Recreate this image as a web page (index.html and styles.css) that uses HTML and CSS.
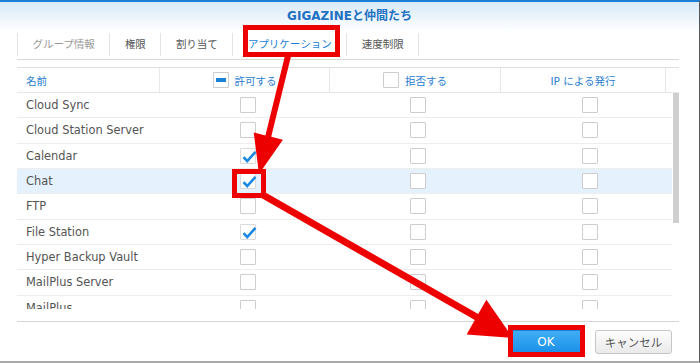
FILE: index.html
```html
<!DOCTYPE html>
<html lang="ja">
<head>
    <meta charset="UTF-8">
    <meta name="viewport" content="width=device-width, initial-scale=1.0">
    <title>GIGAZINEと仲間たち</title>
    <link rel="stylesheet" href="styles.css">
</head>
<body>
    <div class="dialog">
        <div class="dialog-title">GIGAZINEと仲間たち</div>

        <div class="tabs">
            <div class="tab tab-disabled">グループ情報</div>
            <div class="tab">権限</div>
            <div class="tab">割り当て</div>
            <div class="tab tab-active">アプリケーション</div>
            <div class="tab">速度制限</div>
        </div>

        <div class="grid">
            <div class="grid-head">
                <div class="head-name">名前</div>
                <div class="head-allow"><span class="cb cb-partial"></span>許可する</div>
                <div class="head-deny"><span class="cb"></span>拒否する</div>
                <div class="head-ip">IP による発行</div>
                <div class="head-rest"></div>
            </div>

            <div class="grid-body">
                <div class="rows">
                    <div class="row">
                        <div class="cell-name">Cloud Sync</div>
                        <div class="cell"><span class="cb"></span></div>
                        <div class="cell"><span class="cb"></span></div>
                        <div class="cell cell-ip"><span class="cb"></span></div>
                    </div>
                    <div class="row">
                        <div class="cell-name">Cloud Station Server</div>
                        <div class="cell"><span class="cb"></span></div>
                        <div class="cell"><span class="cb"></span></div>
                        <div class="cell cell-ip"><span class="cb"></span></div>
                    </div>
                    <div class="row">
                        <div class="cell-name">Calendar</div>
                        <div class="cell"><span class="cb cb-on"><svg viewBox="0 0 16 16"><path d="M2.5 8.2 L6.2 12 L14.5 2.8"/></svg></span></div>
                        <div class="cell"><span class="cb"></span></div>
                        <div class="cell cell-ip"><span class="cb"></span></div>
                    </div>
                    <div class="row row-selected">
                        <div class="cell-name">Chat</div>
                        <div class="cell"><span class="cb cb-on"><svg viewBox="0 0 16 16"><path d="M2.5 8.2 L6.2 12 L14.5 2.8"/></svg></span></div>
                        <div class="cell"><span class="cb"></span></div>
                        <div class="cell cell-ip"><span class="cb"></span></div>
                    </div>
                    <div class="row">
                        <div class="cell-name">FTP</div>
                        <div class="cell"><span class="cb"></span></div>
                        <div class="cell"><span class="cb"></span></div>
                        <div class="cell cell-ip"><span class="cb"></span></div>
                    </div>
                    <div class="row">
                        <div class="cell-name">File Station</div>
                        <div class="cell"><span class="cb cb-on"><svg viewBox="0 0 16 16"><path d="M2.5 8.2 L6.2 12 L14.5 2.8"/></svg></span></div>
                        <div class="cell"><span class="cb"></span></div>
                        <div class="cell cell-ip"><span class="cb"></span></div>
                    </div>
                    <div class="row">
                        <div class="cell-name">Hyper Backup Vault</div>
                        <div class="cell"><span class="cb"></span></div>
                        <div class="cell"><span class="cb"></span></div>
                        <div class="cell cell-ip"><span class="cb"></span></div>
                    </div>
                    <div class="row">
                        <div class="cell-name">MailPlus Server</div>
                        <div class="cell"><span class="cb"></span></div>
                        <div class="cell"><span class="cb"></span></div>
                        <div class="cell cell-ip"><span class="cb"></span></div>
                    </div>
                    <div class="row">
                        <div class="cell-name">MailPlus</div>
                        <div class="cell"><span class="cb"></span></div>
                        <div class="cell"><span class="cb"></span></div>
                        <div class="cell cell-ip"><span class="cb"></span></div>
                    </div>
                </div>
                <div class="scrollbar"><div class="thumb"></div></div>
            </div>
        </div>

        <div class="footer">
            <button type="button" class="btn btn-primary">OK</button>
            <button type="button" class="btn">キャンセル</button>
        </div>

        <!-- red annotations drawn over the dialog -->
        <svg class="marks" viewBox="0 0 700 363">
            <rect x="245.5" y="27.5" width="92" height="27"/>
            <rect x="234.5" y="171.5" width="29" height="24"/>
            <rect x="510.5" y="327.5" width="72" height="27"/>
            <polygon points="285.1,55.3 290.9,56.7 271.2,136.8 282.9,139.7 259,174 253.7,132.5 265.4,135.4"/>
            <polygon points="264.7,192 478.2,314.1 486.4,299.7 513,338 466.6,334.5 474.8,320.1 261.3,198"/>
        </svg>
    </div>
</body>
</html>
```

FILE: styles.css
```css
body {
    margin: 0;
    width: 700px; height: 363px;
    overflow: hidden;
    font-family: "DejaVu Sans", "Noto Sans CJK JP", sans-serif;
    background: #fff;
}

.dialog {
    position: relative;
    height: 363px;
    box-sizing: border-box;
    display: flex; flex-direction: column;
    border-top: 2px solid #1d7ed6;
    border-right: 1px solid #5a5a5a;
    border-bottom: 2px solid #a9a9a9;
    background: linear-gradient(#d8eaf9, #fff 30px);
}

.dialog-title {
    height: 28px; line-height: 28px;
    text-align: center;
    font-size: 12px; font-weight: bold;
    color: #2170c2;
}

.tabs {
    display: flex; align-items: center;
    height: 29px;
    margin: 0 20px 0 17px;
    border-bottom: 1px solid #d9d9d9;
}

.tab {
    height: 23px; line-height: 23px;
    padding: 0 14.5px;
    border-left: 1px solid #e3e3e3;
    font-size: 10.5px; color: #555;
}

.tab:last-child { border-right: 1px solid #e3e3e3; }
.tab-disabled { color: #9a9a9a; }
.tab-active { color: #1c7fd6; }

.grid {
    margin: 7px 20px 0 17px;
    padding-bottom: 12px;
    border-top: 1px solid #dedede;
    border-bottom: 1px solid #d4d4d4;
}

.grid-head {
    display: grid;
    grid-template-columns: 143px 170px 171px 165px 14px;
    height: 25px;
    box-sizing: border-box;
    border-bottom: 1px solid #e6e6e6;
    font-size: 10.5px; color: #2b80d0;
}

.grid-head > div {
    display: flex; align-items: center; justify-content: center;
    gap: 6px;
    border-right: 1px solid #e8e8e8;
}

.grid-head .head-name { justify-content: flex-start; padding-left: 9px; }
.grid-head .head-rest { border-right: none; }

.grid-body {
    display: flex;
    height: 216px;
    overflow: hidden;
}

.rows { width: 655px; }

.row {
    display: grid;
    grid-template-columns: 143px 175px 166px 171px;
    height: 25.33px;
    box-sizing: border-box;
    border-bottom: 1px solid #ededed;
}

.row-selected { background: #e5f1fc; }

.cell-name {
    display: flex; align-items: center;
    padding-left: 9px;
    font-size: 11.4px; color: #545454;
}

.cell {
    display: flex; align-items: center; justify-content: center;
}

.cell-ip { padding-left: 6px; }

.cb {
    position: relative;
    width: 16px; height: 16px;
    box-sizing: border-box;
    border: 1px solid #cdcdcd;
    border-radius: 1px;
    background: #fff;
}

.cb svg {
    position: absolute;
    left: 0; top: 0;
    width: 16px; height: 16px;
    fill: none; stroke: #1b88e2; stroke-width: 2.6;
}

.cb-on { border-color: #dadada; }

.cb-partial::after {
    content: "";
    position: absolute;
    left: 2px; top: 5px;
    width: 10px; height: 4px;
    background: #1b82d9;
}

.scrollbar {
    width: 8px;
    padding-left: 1px;
}

.scrollbar .thumb {
    width: 6px; height: 130px;
    background: #cfcfcf;
}

.footer {
    flex: 1;
    display: flex; justify-content: flex-end; align-items: flex-start;
    gap: 13px;
    padding: 8px 27px 0 0;
}

.btn {
    height: 24px;
    border: 1px solid #c6c6c6;
    border-radius: 3px;
    background: linear-gradient(#fdfdfd, #eaeaea);
    font-family: "DejaVu Sans", "Noto Sans CJK JP", sans-serif;
    font-size: 11.5px; color: #555;
    width: 77px;
    padding: 0;
}

.btn-primary {
    width: 72px;
    border-color: #1a84d8;
    background: linear-gradient(#40aef6, #1a8fe8);
    color: #fff;
    font-size: 12px;
}

.marks {
    position: absolute;
    left: 0; top: -2px;
    width: 700px; height: 363px;
    pointer-events: none;
}

.marks rect { fill: none; stroke: #ec0000; stroke-width: 5; }
.marks polygon { fill: #ec0000; }
```
